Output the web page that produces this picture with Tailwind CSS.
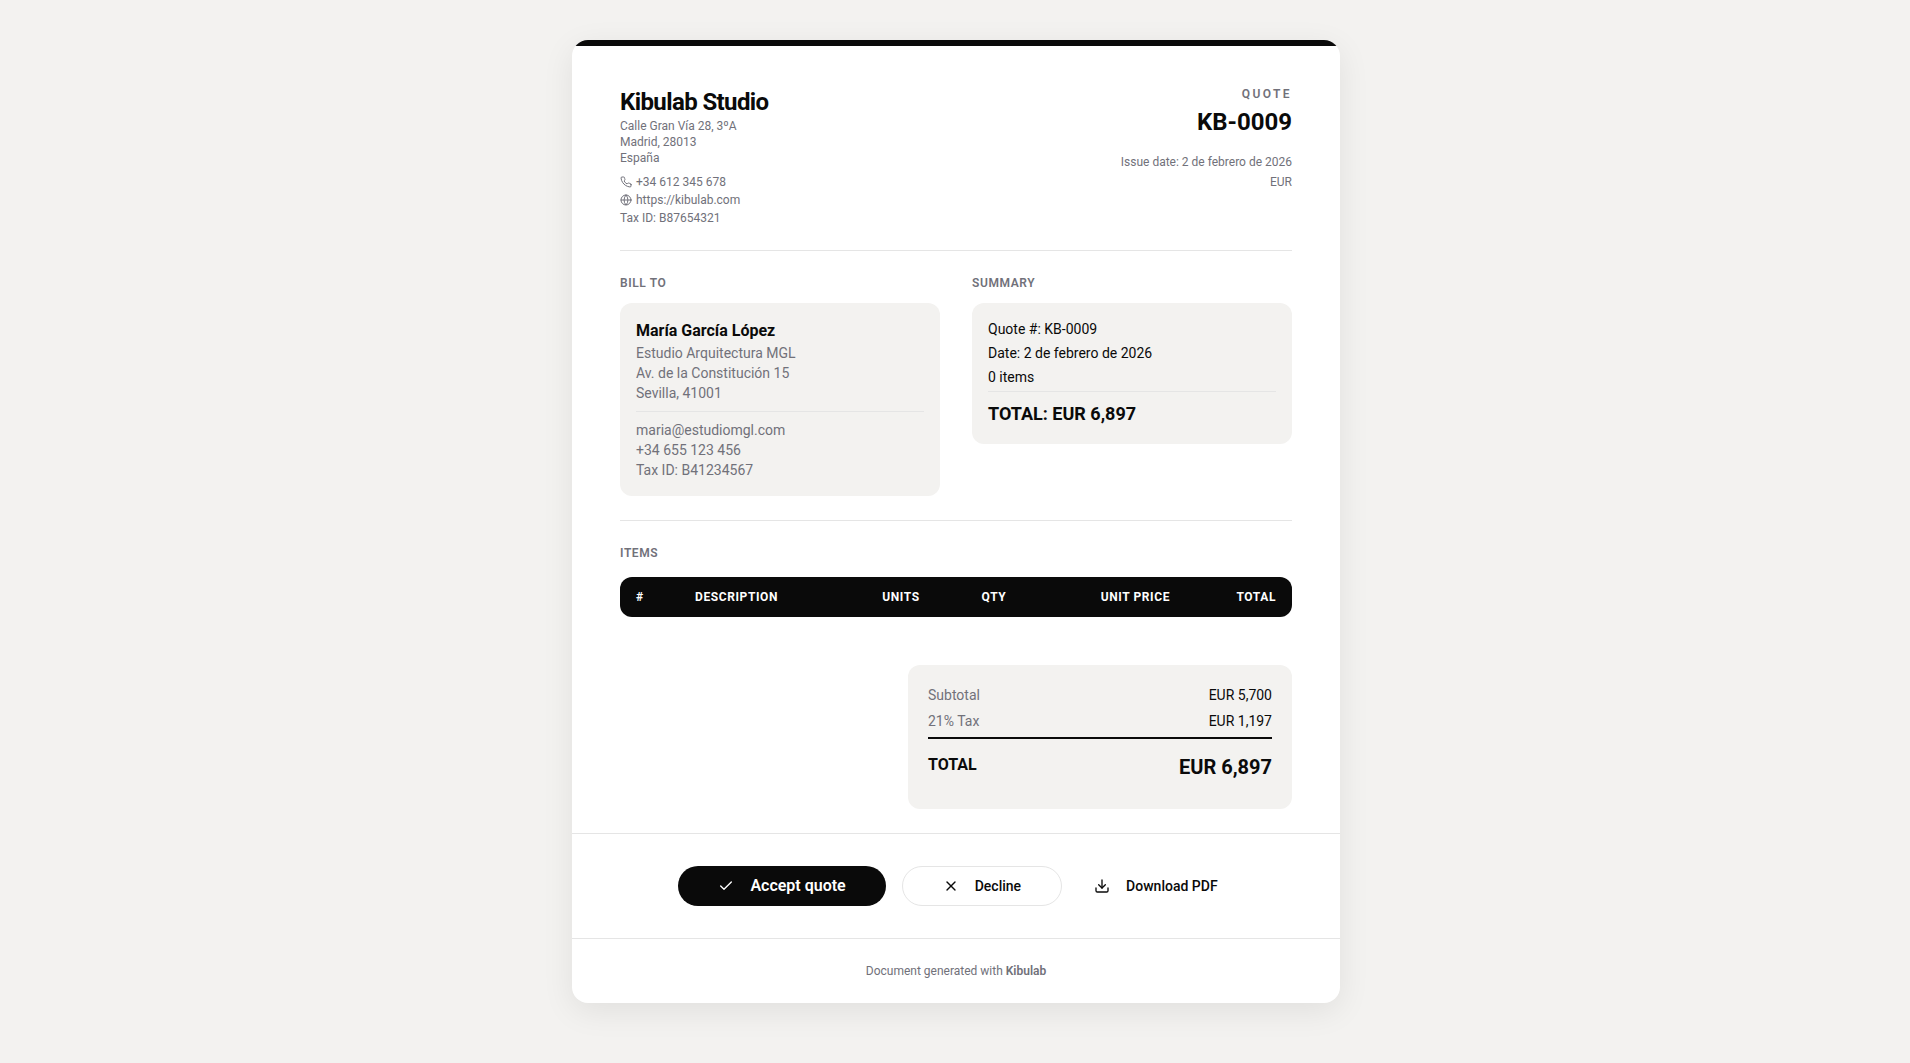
<!DOCTYPE html>
<html lang="en">

<head>
    <meta charset="UTF-8">
    <meta name="viewport" content="width=device-width, initial-scale=1.0">
    <script src="https://cdn.jsdelivr.net/npm/@tailwindcss/browser@4"></script>
    <title>Quote KB-0009</title>
</head>

<body class="bg-[#f3f2f0] text-[#0a0a0a] font-[Roboto,sans-serif] min-h-screen py-10 pl-4 pr-3.5">
    <main class="max-w-3xl mx-auto bg-white rounded-2xl overflow-hidden shadow-[0_8px_32px_rgba(0,0,0,0.08)]">
        <div class="h-1.5 bg-[#0a0a0a]"></div>

        <div class="px-12 pt-10 pb-6">
            <!-- Header -->
            <header class="flex justify-between items-start pb-6 border-b border-[#e5e5e5]">
                <div class="text-xs text-[#71717a]">
                    <h1 class="text-2xl font-bold tracking-tight text-[#0a0a0a]">Kibulab Studio</h1>
                    <p>Calle Gran Vía 28, 3ºA</p>
                    <p>Madrid, 28013</p>
                    <p>España</p>
                    <div class="mt-2 flex flex-col gap-0.5">
                        <p class="flex items-center gap-1">
                            <svg class="w-3 h-3" viewBox="0 0 24 24" fill="none" stroke="currentColor" stroke-width="2" stroke-linecap="round" stroke-linejoin="round">
                                <path d="M22 16.92v3a2 2 0 0 1-2.18 2 19.79 19.79 0 0 1-8.63-3.07 19.5 19.5 0 0 1-6-6 19.79 19.79 0 0 1-3.07-8.67A2 2 0 0 1 4.11 2h3a2 2 0 0 1 2 1.72 12.84 12.84 0 0 0 .7 2.81 2 2 0 0 1-.45 2.11L8.09 9.91a16 16 0 0 0 6 6l1.27-1.27a2 2 0 0 1 2.11-.45 12.84 12.84 0 0 0 2.81.7A2 2 0 0 1 22 16.92z" />
                            </svg>
                            +34 612 345 678
                        </p>
                        <p class="flex items-center gap-1">
                            <svg class="w-3 h-3" viewBox="0 0 24 24" fill="none" stroke="currentColor" stroke-width="2" stroke-linecap="round" stroke-linejoin="round">
                                <circle cx="12" cy="12" r="10" />
                                <path d="M12 2a14.5 14.5 0 0 0 0 20 14.5 14.5 0 0 0 0-20" />
                                <path d="M2 12h20" />
                            </svg>
                            <a href="https://kibulab.com">https://kibulab.com</a>
                        </p>
                        <p>Tax ID: B87654321</p>
                    </div>
                </div>
                <div class="text-right text-xs text-[#71717a]">
                    <p class="font-semibold tracking-[0.2em]">QUOTE</p>
                    <p class="mt-1 text-2xl font-bold text-[#0a0a0a]">KB-0009</p>
                    <p class="mt-4">Issue date: 2 de febrero de 2026</p>
                    <p class="mt-1">EUR</p>
                </div>
            </header>

            <!-- Client and summary -->
            <div class="grid grid-cols-2 gap-8 items-start py-6 border-b border-[#e5e5e5]">
                <section>
                    <h2 class="mb-3 text-xs font-semibold tracking-wider text-[#71717a]">BILL TO</h2>
                    <div class="p-4 rounded-xl bg-[#f3f2f0] text-sm text-[#71717a]">
                        <p class="text-base font-bold text-[#0a0a0a]">María García López</p>
                        <p>Estudio Arquitectura MGL</p>
                        <p>Av. de la Constitución 15</p>
                        <p>Sevilla, 41001</p>
                        <div class="mt-2 pt-2 border-t border-[#e5e5e5]">
                            <p>maria@estudiomgl.com</p>
                            <p>+34 655 123 456</p>
                            <p>Tax ID: B41234567</p>
                        </div>
                    </div>
                </section>
                <section>
                    <h2 class="mb-3 text-xs font-semibold tracking-wider text-[#71717a]">SUMMARY</h2>
                    <div class="p-4 rounded-xl bg-[#f3f2f0] text-sm flex flex-col gap-1">
                        <p>Quote #: KB-0009</p>
                        <p>Date: 2 de febrero de 2026</p>
                        <p>0 items</p>
                        <p class="pt-2 border-t border-[#e5e5e5] text-lg font-bold">TOTAL: EUR 6,897</p>
                    </div>
                </section>
            </div>

            <!-- Items -->
            <section class="pt-6">
                <h2 class="mb-4 text-xs font-semibold tracking-wider text-[#71717a]">ITEMS</h2>
                <div class="rounded-xl overflow-hidden">
                    <table class="w-full table-fixed text-xs text-left">
                        <thead class="bg-[#0a0a0a] text-white tracking-wider">
                            <tr>
                                <th class="w-[59px] px-4 py-3">#</th>
                                <th class="px-4 py-3">DESCRIPTION</th>
                                <th class="w-[94px] px-4 py-3 text-center">UNITS</th>
                                <th class="w-[92px] px-4 py-3 text-center">QTY</th>
                                <th class="w-[146px] px-4 py-3 text-right">UNIT PRICE</th>
                                <th class="w-[106px] px-4 py-3 text-right">TOTAL</th>
                            </tr>
                        </thead>
                        <tbody></tbody>
                    </table>
                </div>
            </section>

            <!-- Totals -->
            <dl class="w-96 ml-auto mt-12 p-5 rounded-xl bg-[#f3f2f0] text-sm">
                <div class="flex justify-between pb-1.5">
                    <dt class="text-[#71717a]">Subtotal</dt>
                    <dd>EUR 5,700</dd>
                </div>
                <div class="flex justify-between pb-1.5">
                    <dt class="text-[#71717a]">21% Tax</dt>
                    <dd>EUR 1,197</dd>
                </div>
                <div class="flex justify-between items-start pt-3.5 pb-2 border-t-2 border-[#0a0a0a] font-bold">
                    <dt class="text-base">TOTAL</dt>
                    <dd class="text-xl">EUR 6,897</dd>
                </div>
            </dl>
        </div>

        <!-- Actions -->
        <div class="flex flex-wrap justify-center gap-4 py-8 border-t border-[#e5e5e5]">
            <button type="button" class="h-10 px-10 flex items-center gap-4 rounded-full bg-[#0a0a0a] text-white text-base font-semibold hover:bg-black">
                <svg class="w-4 h-4" viewBox="0 0 24 24" fill="none" stroke="currentColor" stroke-width="2" stroke-linecap="round" stroke-linejoin="round">
                    <path d="M20 6 9 17l-5-5" />
                </svg>
                Accept quote
            </button>
            <button type="button" class="h-10 px-10 flex items-center gap-4 rounded-full border border-[#e5e5e5] text-sm font-medium hover:bg-gray-50">
                <svg class="w-4 h-4" viewBox="0 0 24 24" fill="none" stroke="currentColor" stroke-width="2" stroke-linecap="round" stroke-linejoin="round">
                    <path d="M18 6 6 18" />
                    <path d="m6 6 12 12" />
                </svg>
                Decline
            </button>
            <button type="button" class="h-10 px-4 flex items-center gap-4 rounded-full text-sm font-medium hover:bg-gray-50">
                <svg class="w-4 h-4" viewBox="0 0 24 24" fill="none" stroke="currentColor" stroke-width="2" stroke-linecap="round" stroke-linejoin="round">
                    <path d="M12 15V3" />
                    <path d="M21 15v4a2 2 0 0 1-2 2H5a2 2 0 0 1-2-2v-4" />
                    <path d="m7 10 5 5 5-5" />
                </svg>
                Download PDF
            </button>
        </div>

        <footer class="py-6 border-t border-[#e5e5e5] text-center text-xs text-[#71717a]">
            Document generated with <span class="font-semibold">Kibulab</span>
        </footer>
    </main>
</body>

</html>
